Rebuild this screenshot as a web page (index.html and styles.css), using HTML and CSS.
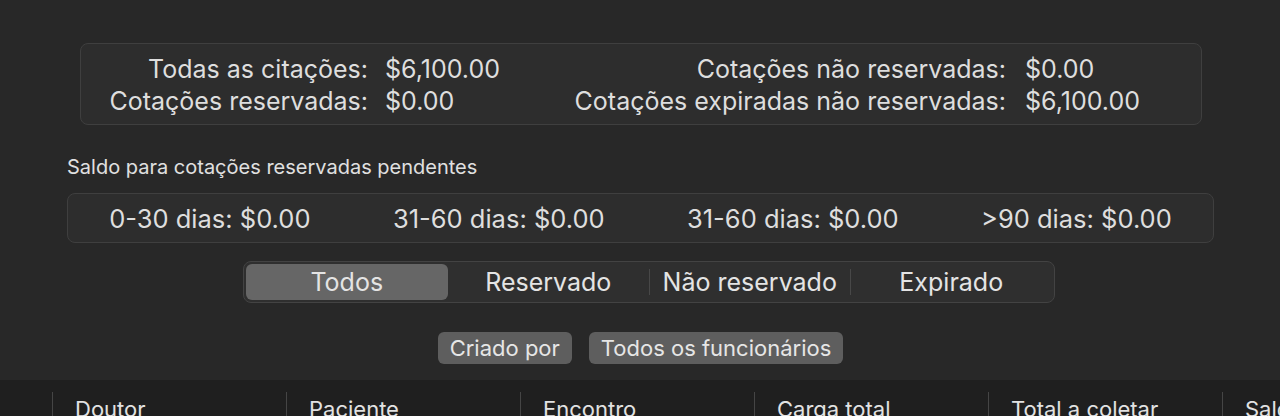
FILE: index.html
```html
<!DOCTYPE html>
<html lang="pt">

<head>
  <meta charset="UTF-8">
  <meta name="viewport" content="width=device-width, initial-scale=1.0">
  <title>Cotações</title>
  <link rel="stylesheet" href="styles.css">
</head>

<body>
  <div class="quotes">
    <div class="summary">
      <div class="label">Todas as citações:</div>
      <div class="value">$6,100.00</div>
      <div class="label">Cotações não reservadas:</div>
      <div class="value value-right">$0.00</div>
      <div class="label">Cotações reservadas:</div>
      <div class="value">$0.00</div>
      <div class="label">Cotações expiradas não reservadas:</div>
      <div class="value value-right">$6,100.00</div>
    </div>

    <div class="section-title">Saldo para cotações reservadas pendentes</div>
    <div class="aging">
      <span>0-30 dias: $0.00</span>
      <span>31-60 dias: $0.00</span>
      <span>31-60 dias: $0.00</span>
      <span>&gt;90 dias: $0.00</span>
    </div>

    <div class="segmented">
      <button class="segment active">Todos</button>
      <button class="segment">Reservado</button>
      <span class="divider"></span>
      <button class="segment">Não reservado</button>
      <span class="divider"></span>
      <button class="segment">Expirado</button>
    </div>

    <div class="filters">
      <button class="pill">Criado por</button>
      <button class="pill">Todos os funcionários</button>
    </div>
  </div>

  <div class="table-head">
    <div class="col col-check"></div>
    <div class="col">Doutor</div>
    <div class="col">Paciente</div>
    <div class="col">Encontro</div>
    <div class="col">Carga total</div>
    <div class="col">Total a coletar</div>
    <div class="col">Saldo</div>
  </div>
</body>

</html>
```

FILE: styles.css
```css
* {
  margin: 0;
  padding: 0;
  box-sizing: border-box;
  font-family: 'Inter', 'Liberation Sans', sans-serif;
}

body {
  background: #282828;
  color: #dedede;
  width: 1280px;
  height: 416px;
  overflow: hidden;
}

.quotes {
  padding: 43px 66px 0 67px;
}

.summary {
  margin: 0 12px 0 13px;
  height: 82px;
  padding: 9px 0;
  display: grid;
  grid-template-columns: 287px 200px 438px 1fr;
  grid-auto-rows: 32px;
  align-items: center;
  background: #2d2d2d;
  border: 1px solid #3f3f3f;
  border-radius: 8px;
  font-size: 25px;
  white-space: nowrap;
}

.label {
  text-align: right;
}

.value {
  padding-left: 17px;
}

.value-right {
  padding-left: 19px;
}

.section-title {
  margin-top: 30px;
  font-size: 20px;
  line-height: 24px;
  color: #e0e0e0;
}

.aging {
  margin-top: 14px;
  height: 50px;
  display: flex;
  justify-content: space-around;
  align-items: center;
  background: #2d2d2d;
  border: 1px solid #3f3f3f;
  border-radius: 8px;
  font-size: 25.5px;
}

.segmented {
  margin: 18px 0 0 176px;
  width: 812px;
  height: 42px;
  padding: 2px;
  display: flex;
  align-items: center;
  background: #2f2f2f;
  border: 1px solid #434343;
  border-radius: 8px;
}

.segment {
  flex: 1;
  height: 100%;
  border: none;
  background: transparent;
  color: #e4e4e4;
  font-size: 25px;
  border-radius: 6px;
}

.segment.active {
  background: #666666;
}

.divider {
  width: 1px;
  height: 26px;
  background: #484848;
  margin: 0 -0.5px;
}

.filters {
  margin-top: 29px;
  display: flex;
  justify-content: center;
  gap: 17px;
}

.pill {
  height: 32px;
  padding: 0 12px;
  border: none;
  border-radius: 6px;
  background: #5e5e5e;
  color: #e6e6e6;
  font-size: 22px;
}

.table-head {
  margin-top: 16px;
  height: 60px;
  display: flex;
  background: #1f1f1f;
}

.col {
  width: 234px;
  flex-shrink: 0;
  margin-top: 12px;
  padding: 4px 0 0 22px;
  border-left: 1px solid #454545;
  font-size: 22px;
  color: #e2e2e2;
  white-space: nowrap;
}

.col-check {
  width: 52px;
  border-left: none;
}
```
